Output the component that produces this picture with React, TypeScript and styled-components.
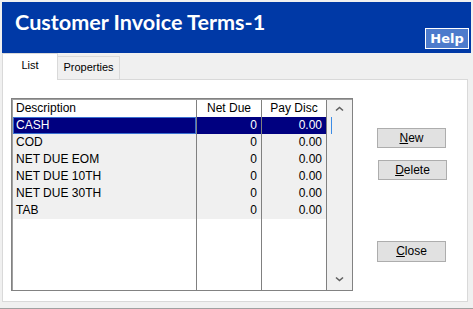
import React from "react";
import styled, { createGlobalStyle } from "styled-components";

const GlobalStyle = createGlobalStyle`
  html, body {
    margin: 0;
    padding: 0;
    background: #f0f0f0;
  }
  body {
    font-family: "Liberation Sans", Arial, sans-serif;
  }
`;

const terms = [
  { name: "CASH", netDue: "0", payDisc: "0.00" },
  { name: "COD", netDue: "0", payDisc: "0.00" },
  { name: "NET DUE EOM", netDue: "0", payDisc: "0.00" },
  { name: "NET DUE 10TH", netDue: "0", payDisc: "0.00" },
  { name: "NET DUE 30TH", netDue: "0", payDisc: "0.00" },
  { name: "TAB", netDue: "0", payDisc: "0.00" },
];

function Chevron({ down }: { down?: boolean }) {
  return (
    <svg width="9" height="6" viewBox="0 0 9 6">
      <polyline
        points={down ? "1,1.5 4.5,4.5 8,1.5" : "1,4.5 4.5,1.5 8,4.5"}
        fill="none"
        stroke="#606060"
        strokeWidth="1.6"
      />
    </svg>
  );
}

export default function App() {
  const selected = 0;

  return (
    <Window>
      <GlobalStyle />
      <Header>
        <Title>Customer Invoice Terms-1</Title>
        <HelpButton>Help</HelpButton>
      </Header>

      <TabBar>
        <Tab $active>List</Tab>
        <Tab>Properties</Tab>
      </TabBar>

      <Panel>
        <GridBox>
          <Column $width={184}>
            <HeadCell $align="left">Description</HeadCell>
            {terms.map((t, i) => (
              <Cell key={t.name} $align="left" $selected={i === selected} $focus={i === selected}>
                {t.name}
              </Cell>
            ))}
          </Column>
          <Column $width={65}>
            <HeadCell $align="center">Net Due</HeadCell>
            {terms.map((t, i) => (
              <Cell key={t.name} $align="right" $selected={i === selected}>
                {t.netDue}
              </Cell>
            ))}
          </Column>
          <Column $width={65}>
            <HeadCell $align="center">Pay Disc</HeadCell>
            {terms.map((t, i) => (
              <Cell key={t.name} $align="right" $selected={i === selected}>
                {t.payDisc}
                {i === selected && <EditFocus />}
              </Cell>
            ))}
          </Column>
          <ScrollBar>
            <Chevron />
            <Chevron down />
          </ScrollBar>
        </GridBox>

        <Buttons>
          <Button>
            <u>N</u>ew
          </Button>
          <Button $shift>
            <u>D</u>elete
          </Button>
          <Button $gap>
            <u>C</u>lose
          </Button>
        </Buttons>
      </Panel>
    </Window>
  );
}

const Window = styled.div`
  width: 473px;
  height: 309px;
  box-sizing: border-box;
  padding: 2px 2px 0 2px;
  border-bottom: 1px solid #a0a0a0;
  background: #f0f0f0;
  overflow: hidden;
`;

const Header = styled.div`
  height: 51px;
  background: #0039a6;
  display: flex;
  justify-content: space-between;
  align-items: flex-start;
  padding-left: 13px;
`;

const Title = styled.div`
  font-family: Lato, "Open Sans", sans-serif;
  font-weight: 700;
  font-size: 21.6px;
  line-height: 22px;
  color: #ffffff;
  padding-top: 9px;
`;

const HelpButton = styled.div`
  align-self: flex-end;
  margin: 0 2px 4px 0;
  width: 44px;
  height: 21px;
  box-sizing: border-box;
  border: 1px solid #ffffff;
  background: #4d7bcc;
  color: #ffffff;
  font-family: "DejaVu Sans", Verdana, sans-serif;
  font-weight: 700;
  font-size: 13px;
  line-height: 19px;
  text-align: center;
`;

const TabBar = styled.div`
  height: 26px;
  display: flex;
  align-items: flex-end;
`;

const Tab = styled.div<{ $active?: boolean }>`
  box-sizing: border-box;
  height: ${(p) => (p.$active ? "27px" : "23px")};
  width: ${(p) => (p.$active ? "56px" : "62px")};
  margin-bottom: ${(p) => (p.$active ? "-1px" : "0")};
  position: relative;
  z-index: ${(p) => (p.$active ? 1 : 0)};
  background: ${(p) => (p.$active ? "#ffffff" : "#f0f0f0")};
  border: 1px solid #d9d9d9;
  border-bottom: none;
  border-left: ${(p) => (p.$active ? "1px solid #d9d9d9" : "none")};
  font-size: 11px;
  color: #000;
  text-align: center;
  padding-top: ${(p) => (p.$active ? "5px" : "4px")};
`;

const Panel = styled.div`
  width: 466px;
  height: 223px;
  box-sizing: border-box;
  background: #ffffff;
  border: 1px solid #d9d9d9;
  display: flex;
  align-items: flex-start;
  padding: 18px 0 0 8px;
`;

const GridBox = styled.div`
  width: 342px;
  height: 193px;
  box-sizing: border-box;
  border: 1px solid #828282;
  box-shadow: inset 1px 1px 0 #a0a0a0;
  padding: 1px 0 0 1px;
  display: flex;
  background: #ffffff;
`;

const Column = styled.div<{ $width: number }>`
  width: ${(p) => p.$width}px;
  box-sizing: border-box;
  border-right: 1px solid #808080;
  display: flex;
  flex-direction: column;
`;

const HeadCell = styled.div<{ $align: string }>`
  height: 17px;
  line-height: 17px;
  font-size: 12px;
  color: #000;
  text-align: ${(p) => p.$align};
  padding: 0 3px;
  background: #ffffff;
`;

const Cell = styled.div<{ $align: string; $selected?: boolean; $focus?: boolean }>`
  position: relative;
  height: 17px;
  line-height: 17px;
  font-size: 12px;
  white-space: nowrap;
  text-align: ${(p) => p.$align};
  padding: ${(p) => (p.$align === "right" ? "0 4px 0 0" : "0 0 0 3px")};
  background: ${(p) => (p.$selected ? "#000080" : "#f0f0f0")};
  color: ${(p) => (p.$selected ? "#ffffff" : "#000000")};
  box-shadow: ${(p) => (p.$focus ? "inset 0 0 0 1px #3a6fd0" : "none")};
`;

const EditFocus = styled.span`
  position: absolute;
  top: 0;
  bottom: 0;
  left: 0;
  right: -6px;
  border-right: 1px solid #3c8ce6;
  pointer-events: none;
`;

const ScrollBar = styled.div`
  flex: 1;
  background: #f0f0f0;
  display: flex;
  flex-direction: column;
  justify-content: space-between;
  align-items: center;
  padding: 6px 0 8px;
`;

const Buttons = styled.div`
  margin-left: 24px;
  padding-top: 30px;
  display: flex;
  flex-direction: column;
  align-items: flex-start;
`;

const Button = styled.div<{ $shift?: boolean; $gap?: boolean }>`
  width: 69px;
  height: ${(p) => (p.$gap ? "21px" : "20px")};
  box-sizing: border-box;
  border: 1px solid #adadad;
  background: #e1e1e1;
  font-size: 12px;
  line-height: 18px;
  color: #000;
  text-align: center;
  margin-left: ${(p) => (p.$shift ? "1px" : "0")};
  margin-top: ${(p) => (p.$gap ? "61px" : p.$shift ? "12px" : "0")};
`;
